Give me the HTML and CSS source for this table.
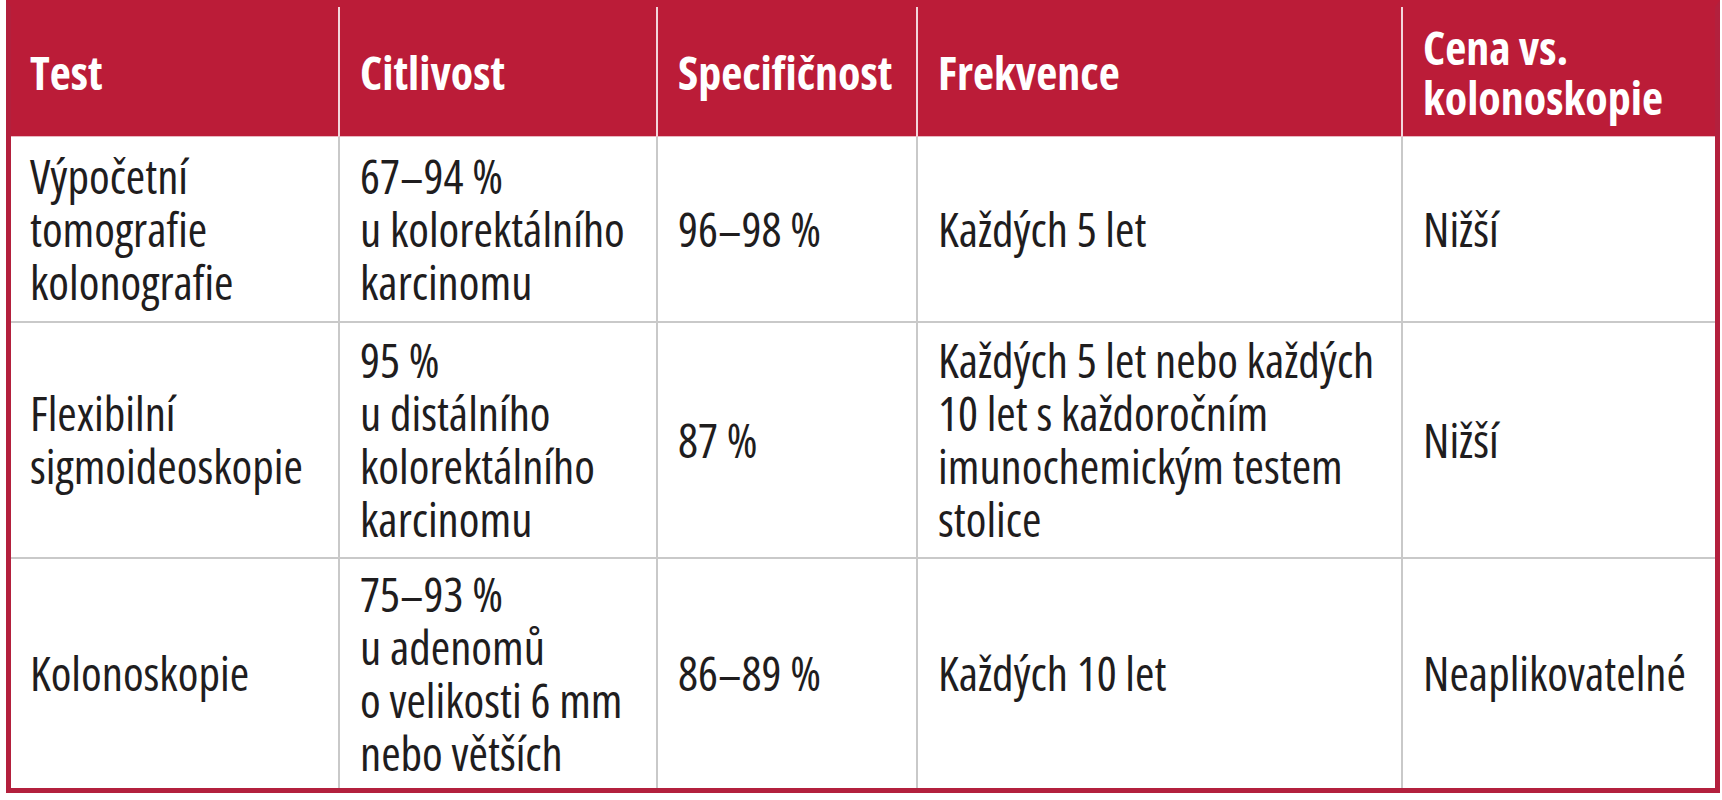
FILE: index.html
```html
<!DOCTYPE html>
<html lang="cs">
<head>
<meta charset="utf-8">
<title>Screeningové testy</title>
<link rel="stylesheet" href="styles.css">
</head>
<body>
<div class="table">
  <div class="cell head first">Test</div>
  <div class="cell head">Citlivost</div>
  <div class="cell head">Specifičnost</div>
  <div class="cell head">Frekvence</div>
  <div class="cell head">Cena vs.<br>kolonoskopie</div>

  <div class="cell first">Výpočetní<br>tomografie<br>kolonografie</div>
  <div class="cell">67–94&nbsp;%<br>u kolorektálního<br>karcinomu</div>
  <div class="cell">96–98&nbsp;%</div>
  <div class="cell">Každých 5 let</div>
  <div class="cell">Nižší</div>

  <div class="cell first row">Flexibilní<br>sigmoideoskopie</div>
  <div class="cell row">95&nbsp;%<br>u distálního<br>kolorektálního<br>karcinomu</div>
  <div class="cell row">87&nbsp;%</div>
  <div class="cell row">Každých 5 let nebo každých<br>10 let s každoročním<br>imunochemickým testem<br>stolice</div>
  <div class="cell row">Nižší</div>

  <div class="cell first row">Kolonoskopie</div>
  <div class="cell row">75–93&nbsp;%<br>u adenomů<br>o velikosti 6&nbsp;mm<br>nebo větších</div>
  <div class="cell row">86–89&nbsp;%</div>
  <div class="cell row">Každých 10 let</div>
  <div class="cell row">Neaplikovatelné</div>
</div>
</body>
</html>
```
FILE: styles.css
```css
html, body {
  margin: 0;
  padding: 0;
  background: #ffffff;
}

body {
  padding-left: 6px;
}

.table {
  display: grid;
  grid-template-columns: 327px 318px 260px 485px 314px;
  grid-template-rows: 130px 184px 236px 231px;
  width: 1704px;
  border: 5px solid #b3203d;
  border-top: 7px solid #bb1c38;
  background: #ffffff;
  font-family: "Open Sans", "DejaVu Sans Condensed", sans-serif;
  font-stretch: 75%;
  color: #1f1d1e;
}

.cell {
  display: flex;
  align-items: center;
  padding: 0 8px 0 20px;
  border-left: 2px solid #c9c9c9;
  font-size: 47px;
  line-height: 53px;
  white-space: nowrap;
}

.cell.first {
  border-left: none;
  padding-left: 19px;
}

.cell.row {
  border-top: 2px solid #c9c9c9;
}

.cell.head {
  background: #bb1c38;
  color: #ffffff;
  font-weight: 700;
  font-size: 46px;
  line-height: 50px;
  border-left: 2px solid #f3d6dc;
  border-bottom: 1px solid #e9b6c0;
}

.cell.head.first {
  border-left: none;
}
```
